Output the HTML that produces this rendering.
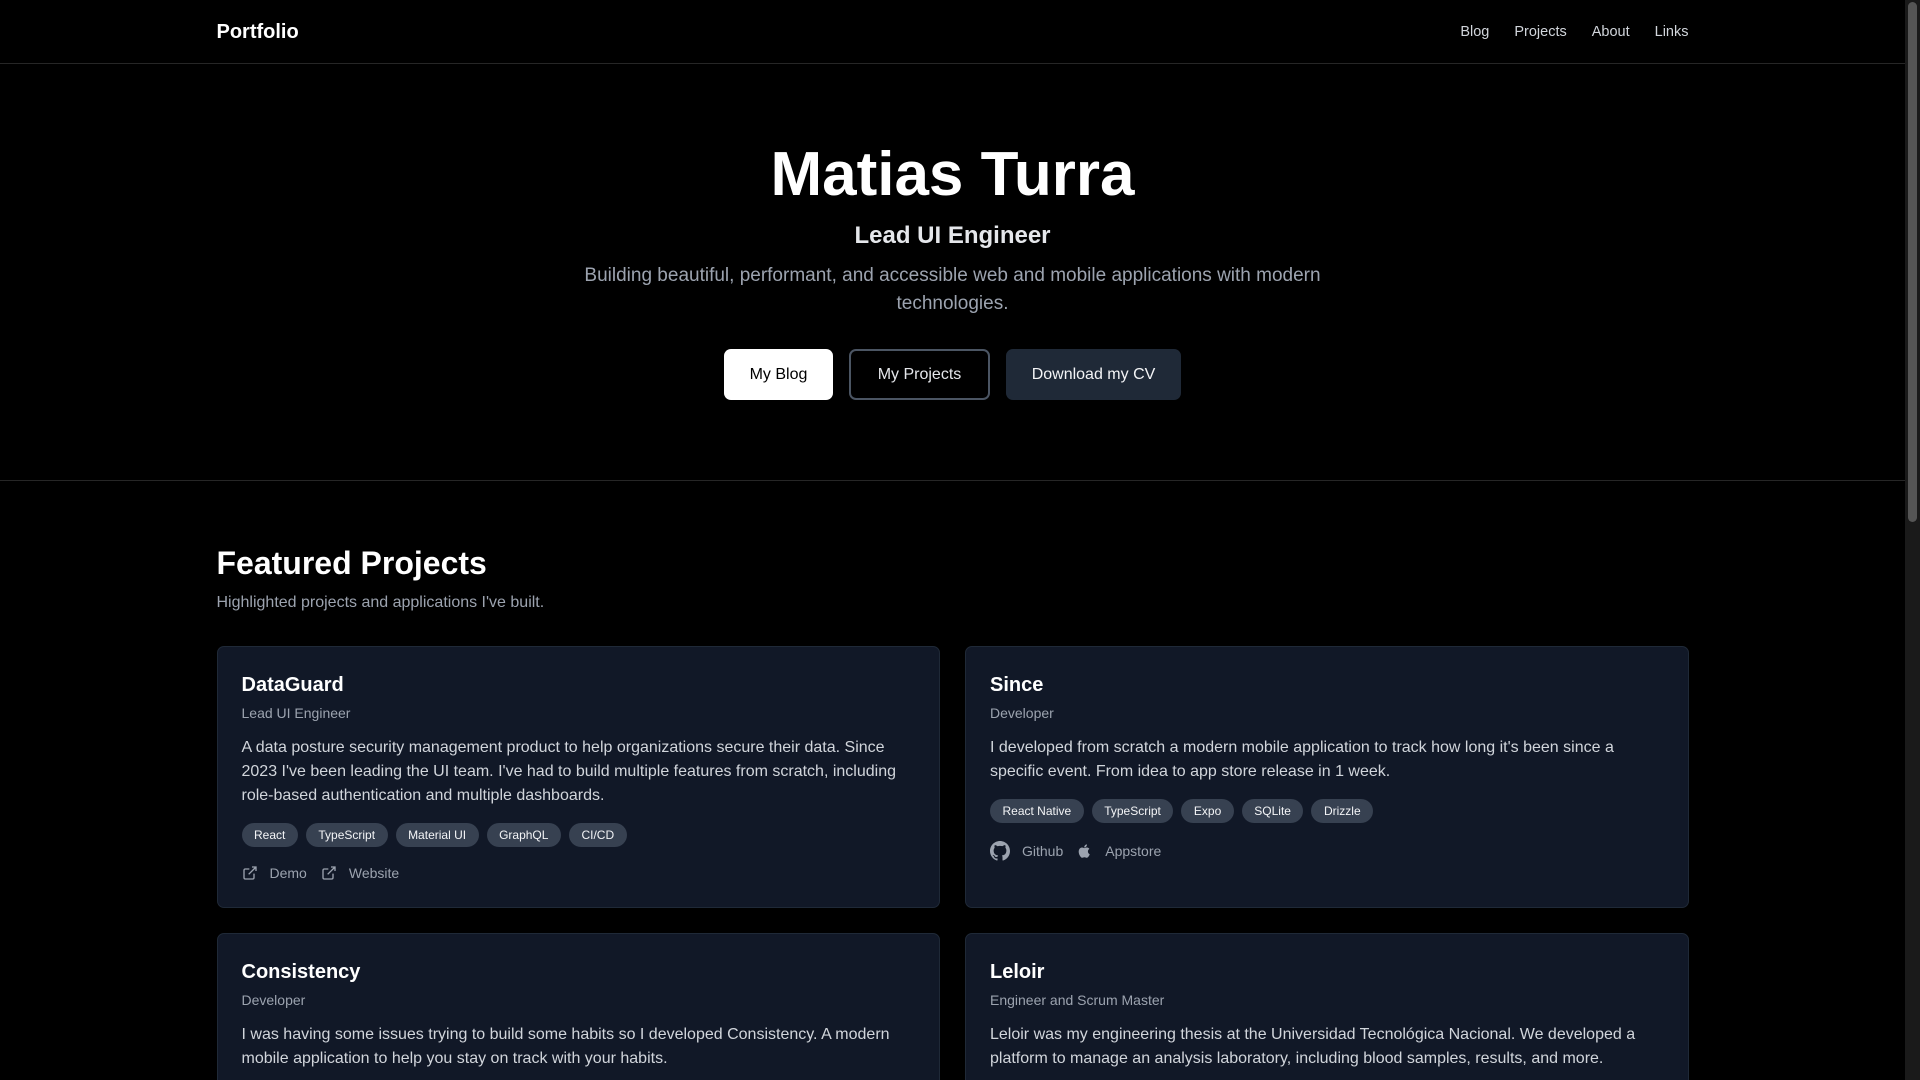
<!DOCTYPE html>
<html><head><meta charset="utf-8"><style>
*{box-sizing:border-box;margin:0;padding:0}
html,body{background:#000;color:#fff;font-family:"Liberation Sans",sans-serif;width:1920px;height:1080px;overflow:hidden}
.sb{position:absolute;right:0;top:0;width:15px;height:1080px;background:#1a1a1a}
.sb div{position:absolute;left:3px;right:3px;top:2px;height:520px;background:#555;border-radius:5px}
.wrap{width:1905px;position:relative}
.c{width:1472px;margin:0 auto}
nav{height:64px;border-bottom:1px solid #262626}
nav .c{display:flex;justify-content:space-between;align-items:center;height:64px}
.logo{font-size:20px;font-weight:bold}
.links{display:flex;gap:25px;font-size:14.5px;color:#d1d5db}
.hero{height:417px;border-bottom:1px solid #262626;text-align:center;padding-top:78px}
h1{font-size:62px;font-weight:bold;line-height:66px}
h2{font-size:24px;font-weight:bold;margin-top:14px;color:#e5e7eb}
.hero p{font-size:19px;line-height:28px;color:#9ca3af;width:740px;margin:12px auto 0}
.btns{display:flex;justify-content:center;gap:16px;margin-top:31px}
.btn{height:51px;border-radius:7px;font-size:16px;display:flex;align-items:center;justify-content:center}
.b1{width:109px;background:#fff;color:#000}
.b2{width:141px;border:2px solid #4b5563;color:#e5e7eb}
.b3{width:175px;background:#1f2937;color:#f3f4f6}
.fp h3{font-size:32px;font-weight:bold;margin-top:64px}
.fp .sub{font-size:16px;color:#9ca3af;margin-top:12px}
.grid{display:grid;grid-template-columns:1fr 1fr;gap:25px 25px;margin-top:34px}
.card{background:#111827;border:1px solid #1f2937;border-radius:7px;height:262px;padding:24px 24px}
.card h4{font-size:20px;font-weight:bold;line-height:28px}
.role{font-size:14px;color:#9ca3af;margin-top:6px}
.desc{font-size:16px;line-height:24px;color:#d1d5db;margin-top:15px}
.tags{display:flex;gap:8px;margin-top:15px}
.tag{background:#374151;color:#f3f4f6;font-size:12px;height:24px;line-height:24px;padding:0 12.5px;border-radius:12px}
.lk{display:flex;gap:14px;margin-top:18px;font-size:14px;color:#9ca3af;align-items:center}
.lk span{display:flex;align-items:center;gap:12px}
</style></head><body>
<div class="sb"><div></div></div>
<div class="wrap">
<nav><div class="c"><div class="logo">Portfolio</div><div class="links"><span>Blog</span><span>Projects</span><span>About</span><span>Links</span></div></div></nav>
<div class="hero">
<h1>Matias Turra</h1>
<h2>Lead UI Engineer</h2>
<p>Building beautiful, performant, and accessible web and mobile applications with modern technologies.</p>
<div class="btns"><div class="btn b1">My Blog</div><div class="btn b2">My Projects</div><div class="btn b3">Download my CV</div></div>
</div>
<div class="c fp">
<h3>Featured Projects</h3>
<div class="sub">Highlighted projects and applications I've built.</div>
<div class="grid">
<div class="card"><h4>DataGuard</h4><div class="role">Lead UI Engineer</div>
<div class="desc">A data posture security management product to help organizations secure their data. Since 2023 I've been leading the UI team. I've had to build multiple features from scratch, including role-based authentication and multiple dashboards.</div>
<div class="tags"><span class="tag">React</span><span class="tag">TypeScript</span><span class="tag">Material UI</span><span class="tag">GraphQL</span><span class="tag">CI/CD</span></div>
<div class="lk"><span><svg width="16" height="16" viewBox="0 0 24 24" fill="none" stroke="#9ca3af" stroke-width="2"><path d="M15 3h6v6M10 14L21 3M18 13v6a2 2 0 0 1-2 2H5a2 2 0 0 1-2-2V8a2 2 0 0 1 2-2h6"/></svg>Demo</span><span><svg width="16" height="16" viewBox="0 0 24 24" fill="none" stroke="#9ca3af" stroke-width="2"><path d="M15 3h6v6M10 14L21 3M18 13v6a2 2 0 0 1-2 2H5a2 2 0 0 1-2-2V8a2 2 0 0 1 2-2h6"/></svg>Website</span></div></div>
<div class="card"><h4>Since</h4><div class="role">Developer</div>
<div class="desc">I developed from scratch a modern mobile application to track how long it's been since a specific event. From idea to app store release in 1 week.</div>
<div class="tags"><span class="tag">React Native</span><span class="tag">TypeScript</span><span class="tag">Expo</span><span class="tag">SQLite</span><span class="tag">Drizzle</span></div>
<div class="lk"><span><svg width="20" height="20" viewBox="0 0 16 16" fill="#9ca3af"><path d="M8 0C3.58 0 0 3.58 0 8c0 3.54 2.290 6.530 5.470 7.590.4.070.55-.17.55-.38v-1.340c-2.230.48-2.700-1.070-2.700-1.070-.36-.92-.89-1.170-.89-1.170-.73-.5.05-.49.05-.49.8.06 1.230.83 1.230.83.71 1.220 1.870.87 2.330.66.07-.52.28-.87.5-1.070-1.780-.2-3.640-.89-3.640-3.950 0-.87.31-1.590.82-2.150-.08-.2-.36-1.020.08-2.120 0 0 .67-.21 2.200.82A7.600 7.600 0 0 1 8 3.870c.68 0 1.360.09 2 .27 1.530-1.040 2.200-.82 2.200-.82.44 1.100.16 1.920.08 2.120.51.56.82 1.270.82 2.150 0 3.070-1.870 3.750-3.650 3.950.29.25.54.73.54 1.480v2.190c0 .21.15.46.55.38A8 8 0 0 0 16 8c0-4.420-3.580-8-8-8z"/></svg>Github</span><span><svg width="16" height="16" viewBox="0 0 24 24" fill="#9ca3af"><path d="M16.400 12.700c0-2.600 2.100-3.800 2.200-3.900-1.200-1.800-3.100-2-3.700-2-1.600-.2-3.100.9-3.900.9-.8 0-2-.9-3.400-.9-1.700 0-3.300 1-4.200 2.600-1.800 3.100-.5 7.700 1.300 10.200.9 1.200 1.900 2.600 3.200 2.600 1.300-.1 1.800-.8 3.300-.8s2 .8 3.400.8c1.400 0 2.300-1.300 3.100-2.500 1-1.400 1.400-2.800 1.400-2.900 0 0-2.700-1-2.700-4.100zM13.900 5.200c.7-.9 1.200-2 1-3.200-1 0-2.300.7-3 1.600-.7.800-1.200 2-1.100 3.100 1.200.1 2.300-.6 3.100-1.500z"/></svg>Appstore</span></div></div>
<div class="card"><h4>Consistency</h4><div class="role">Developer</div>
<div class="desc">I was having some issues trying to build some habits so I developed Consistency. A modern mobile application to help you stay on track with your habits.</div></div>
<div class="card"><h4>Leloir</h4><div class="role">Engineer and Scrum Master</div>
<div class="desc">Leloir was my engineering thesis at the Universidad Tecnológica Nacional. We developed a platform to manage an analysis laboratory, including blood samples, results, and more.</div></div>
</div></div></div>
</body></html>
